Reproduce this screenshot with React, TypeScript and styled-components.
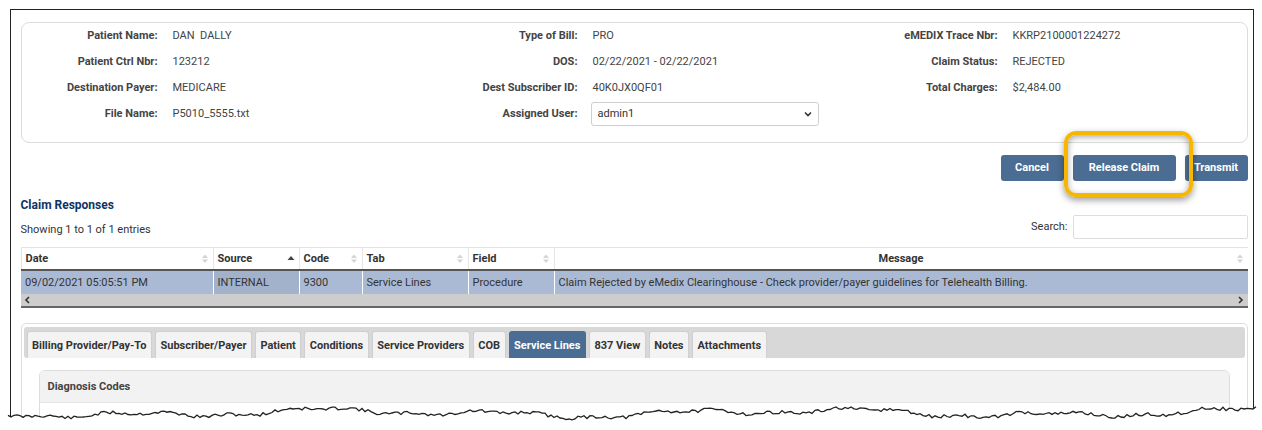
import React from 'react';
import styled, { createGlobalStyle } from 'styled-components';

const GlobalStyle = createGlobalStyle`
  html, body {
    margin: 0;
    padding: 0;
    background: #fff;
  }
  body {
    font-family: Roboto, "Liberation Sans", Arial, sans-serif;
    font-size: 11px;
    color: #333;
  }
  * { box-sizing: border-box; }
`;

const Page = styled.div`
  position: relative;
  width: 1262px;
  height: 430px;
  overflow: hidden;
  padding: 9px 0 0 10px;
`;

const Frame = styled.div`
  width: 1244px;
  height: 414px;
  border: 1.5px solid #222;
  border-bottom: none;
  overflow: hidden;
  padding: 11.5px 5.5px 0 9.5px;
`;

const InfoPanel = styled.div`
  display: flex;
  height: 121px;
  border: 1px solid #dcdcdc;
  border-radius: 8px;
`;

const InfoColumn = styled.div<{ $last?: boolean }>`
  display: flex;
  flex-direction: column;
  width: ${p => (p.$last ? 'auto' : '420px')};
  flex: ${p => (p.$last ? 1 : 'none')};
`;

const Field = styled.div`
  display: flex;
  align-items: center;
  height: 26px;
`;

const Label = styled.span`
  width: 136px;
  text-align: right;
  font-weight: 700;
  color: #444;
  margin-right: 15px;
`;

const Value = styled.span`
  color: #444;
  white-space: pre;
`;

const Select = styled.div`
  display: flex;
  align-items: center;
  justify-content: space-between;
  width: 228px;
  height: 24px;
  margin-left: -2px;
  padding: 0 6px 0 6px;
  border: 1px solid #cfcfcf;
  border-radius: 3px;
  color: #333;
  background: #fff;
`;

const ButtonRow = styled.div`
  display: flex;
  justify-content: flex-end;
  gap: 9px;
  margin-top: 12px;
`;

const Button = styled.button<{ $w: number }>`
  width: ${p => p.$w}px;
  height: 26px;
  border: none;
  border-radius: 3px;
  background: #4b6d93;
  color: #fff;
  font-family: Roboto, "Liberation Sans", Arial, sans-serif;
  font-size: 11px;
  font-weight: 700;
  padding: 0;
`;

const Highlight = styled.span`
  position: relative;
  display: inline-flex;
  &::after {
    content: '';
    position: absolute;
    left: -9px;
    right: -17px;
    top: -24px;
    bottom: -16px;
    border: 4px solid #f7b700;
    border-radius: 12px;
    box-shadow: 0 3px 7px rgba(0, 0, 0, 0.4), inset 0 2px 6px rgba(0, 0, 0, 0.35);
    pointer-events: none;
  }
`;

const Heading = styled.h2`
  margin: 17px 0 0;
  font-size: 12px;
  font-weight: 700;
  color: #0d3466;
  line-height: 14px;
`;

const ListBar = styled.div`
  display: flex;
  justify-content: space-between;
  align-items: center;
  margin-top: 2px;
  height: 26px;
`;

const Showing = styled.span`
  padding-top: 6px;
  color: #333;
`;

const SearchBox = styled.label`
  display: flex;
  align-items: center;
  gap: 5px;
  color: #333;
`;

const SearchInput = styled.div`
  width: 175px;
  height: 24px;
  border: 1px solid #ddd;
  border-radius: 2px;
`;

const Table = styled.table`
  width: 100%;
  margin-top: 7px;
  border-collapse: collapse;
  table-layout: fixed;
`;

const Th = styled.th<{ $w?: number; $center?: boolean }>`
  position: relative;
  width: ${p => (p.$w ? `${p.$w}px` : 'auto')};
  height: 23px;
  padding: 0 4px;
  text-align: ${p => (p.$center ? 'center' : 'left')};
  font-weight: 700;
  color: #333;
  border-top: 1px solid #e2e2e2;
  border-left: 1px solid #e6e6e6;
  border-bottom: 2px solid #555;
  &:first-child { border-left: 1px solid #e2e2e2; }
`;

const SortMark = styled.svg`
  position: absolute;
  right: 4px;
  top: 6px;
`;

const Td = styled.td<{ $sorted?: boolean }>`
  height: 24px;
  padding: 0 4px;
  background: ${p => (p.$sorted ? '#a3b2cb' : '#abbad4')};
  border-left: 1px solid #fff;
  color: #333;
  white-space: nowrap;
  &:first-child { border-left: none; }
`;

const ScrollBar = styled.div`
  display: flex;
  justify-content: space-between;
  align-items: center;
  height: 14px;
  padding: 0 3px;
  background: #cdcdcd;
  border-bottom: 2px solid #666;
`;

const TabsPanel = styled.div`
  margin-top: 15px;
  border: 1px solid #ddd;
  border-radius: 5px;
  padding: 3px 2px 0;
  height: 110px;
`;

const TabBar = styled.div`
  display: flex;
  gap: 3px;
  height: 31px;
  padding: 4px 0 0 3px;
  background: #d8d8d8;
  border-radius: 3px;
`;

const Tab = styled.div<{ $active?: boolean }>`
  display: flex;
  align-items: center;
  height: 27px;
  padding: 0 4.5px;
  font-weight: 700;
  color: ${p => (p.$active ? '#fff' : '#333')};
  background: ${p => (p.$active ? '#4b6d93' : '#f3f3f3')};
  border: 1px solid ${p => (p.$active ? '#4b6d93' : '#cfcfcf')};
  border-bottom: none;
  border-radius: 3px 3px 0 0;
`;

const SubPanel = styled.div`
  margin: 12px 15px 0 15px;
  border: 1px solid #ddd;
  border-radius: 6px;
  overflow: hidden;
`;

const SubHeader = styled.div`
  display: flex;
  align-items: center;
  height: 32px;
  padding: 0 8px;
  background: #f2f2f2;
  font-weight: 700;
  color: #444;
  border-bottom: 1px solid #e6e6e6;
`;

const SubBody = styled.div`
  height: 40px;
  background: #fff;
`;

const Tear = styled.svg`
  position: absolute;
  left: 0;
  top: 395px;
`;

function SortIcon({ active }: { active?: boolean }) {
  if (active) {
    return (
      <SortMark width="8" height="10" viewBox="0 0 8 10">
        <path d="M0.5 6 L4 2 L7.5 6 Z" fill="#444" />
      </SortMark>
    );
  }
  return (
    <SortMark width="8" height="10" viewBox="0 0 8 10">
      <path d="M1 4 L4 0.5 L7 4 Z" fill="#d4d4d4" />
      <path d="M1 5.5 L4 9 L7 5.5 Z" fill="#d4d4d4" />
    </SortMark>
  );
}

function Chevron({ dir }: { dir: 'left' | 'right' | 'down' }) {
  const d =
    dir === 'left' ? 'M5 1 L2 4 L5 7' : dir === 'right' ? 'M2 1 L5 4 L2 7' : 'M1 2.5 L4 5.5 L7 2.5';
  return (
    <svg width="8" height="8" viewBox="0 0 8 8">
      <path d={d} fill="none" stroke="#333" strokeWidth="1.6" />
    </svg>
  );
}

function tearPath() {
  let seed = 11;
  const rnd = () => {
    seed = (seed * 9301 + 49297) % 233280;
    return seed / 233280;
  };
  const pts: string[] = [];
  for (let x = 8; x <= 1256; x += 3) {
    const y =
      18 +
      Math.sin(x / 29) * 2.6 +
      Math.sin(x / 9.7) * 1.3 +
      Math.sin(x / 73) * 2.4 +
      (rnd() - 0.5) * 3.4;
    pts.push(`${x},${y.toFixed(1)}`);
  }
  return pts;
}

const points = tearPath();

const columns = [
  [
    ['Patient Name:', 'DAN  DALLY'],
    ['Patient Ctrl Nbr:', '123212'],
    ['Destination Payer:', 'MEDICARE'],
    ['File Name:', 'P5010_5555.txt'],
  ],
  [
    ['Type of Bill:', 'PRO'],
    ['DOS:', '02/22/2021 - 02/22/2021'],
    ['Dest Subscriber ID:', '40K0JX0QF01'],
  ],
  [
    ['eMEDIX Trace Nbr:', 'KKRP2100001224272'],
    ['Claim Status:', 'REJECTED'],
    ['Total Charges:', '$2,484.00'],
  ],
];

const tabs = [
  'Billing Provider/Pay-To',
  'Subscriber/Payer',
  'Patient',
  'Conditions',
  'Service Providers',
  'COB',
  'Service Lines',
  '837 View',
  'Notes',
  'Attachments',
];

export default function App() {
  return (
    <Page>
      <GlobalStyle />
      <Frame>
        <InfoPanel>
          {columns.map((col, i) => (
            <InfoColumn key={i} $last={i === 2}>
              {col.map(([l, v]) => (
                <Field key={l}>
                  <Label>{l}</Label>
                  <Value>{v}</Value>
                </Field>
              ))}
              {i === 1 && (
                <Field>
                  <Label>Assigned User:</Label>
                  <Select>
                    admin1
                    <Chevron dir="down" />
                  </Select>
                </Field>
              )}
            </InfoColumn>
          ))}
        </InfoPanel>

        <ButtonRow>
          <Button $w={63}>Cancel</Button>
          <Highlight>
            <Button $w={103}>Release Claim</Button>
          </Highlight>
          <Button $w={63}>Transmit</Button>
        </ButtonRow>

        <Heading>Claim Responses</Heading>
        <ListBar>
          <Showing>Showing 1 to 1 of 1 entries</Showing>
          <SearchBox>
            Search:
            <SearchInput />
          </SearchBox>
        </ListBar>

        <Table>
          <thead>
            <tr>
              <Th $w={192}>Date<SortIcon /></Th>
              <Th $w={86}>Source<SortIcon active /></Th>
              <Th $w={63}>Code<SortIcon /></Th>
              <Th $w={106}>Tab<SortIcon /></Th>
              <Th $w={86}>Field<SortIcon /></Th>
              <Th $center>Message<SortIcon /></Th>
            </tr>
          </thead>
          <tbody>
            <tr>
              <Td>09/02/2021 05:05:51 PM</Td>
              <Td $sorted>INTERNAL</Td>
              <Td>9300</Td>
              <Td>Service Lines</Td>
              <Td>Procedure</Td>
              <Td>Claim Rejected by eMedix Clearinghouse - Check provider/payer guidelines for Telehealth Billing.</Td>
            </tr>
          </tbody>
        </Table>
        <ScrollBar>
          <Chevron dir="left" />
          <Chevron dir="right" />
        </ScrollBar>

        <TabsPanel>
          <TabBar>
            {tabs.map(t => (
              <Tab key={t} $active={t === 'Service Lines'}>{t}</Tab>
            ))}
          </TabBar>
          <SubPanel>
            <SubHeader>Diagnosis Codes</SubHeader>
            <SubBody />
          </SubPanel>
        </TabsPanel>
      </Frame>
      <Tear width="1262" height="35" viewBox="0 0 1262 35">
        <polygon points={`0,0 ${points.join(' ')} 1262,0 1262,35 0,35`} fill="#fff" />
        <polygon points={`0,35 0,${points[0].split(',')[1]} ${points.join(' ')} 1262,35`} fill="#fff" />
        <polyline points={points.join(' ')} fill="none" stroke="#222" strokeWidth="1.3" />
      </Tear>
    </Page>
  );
}
